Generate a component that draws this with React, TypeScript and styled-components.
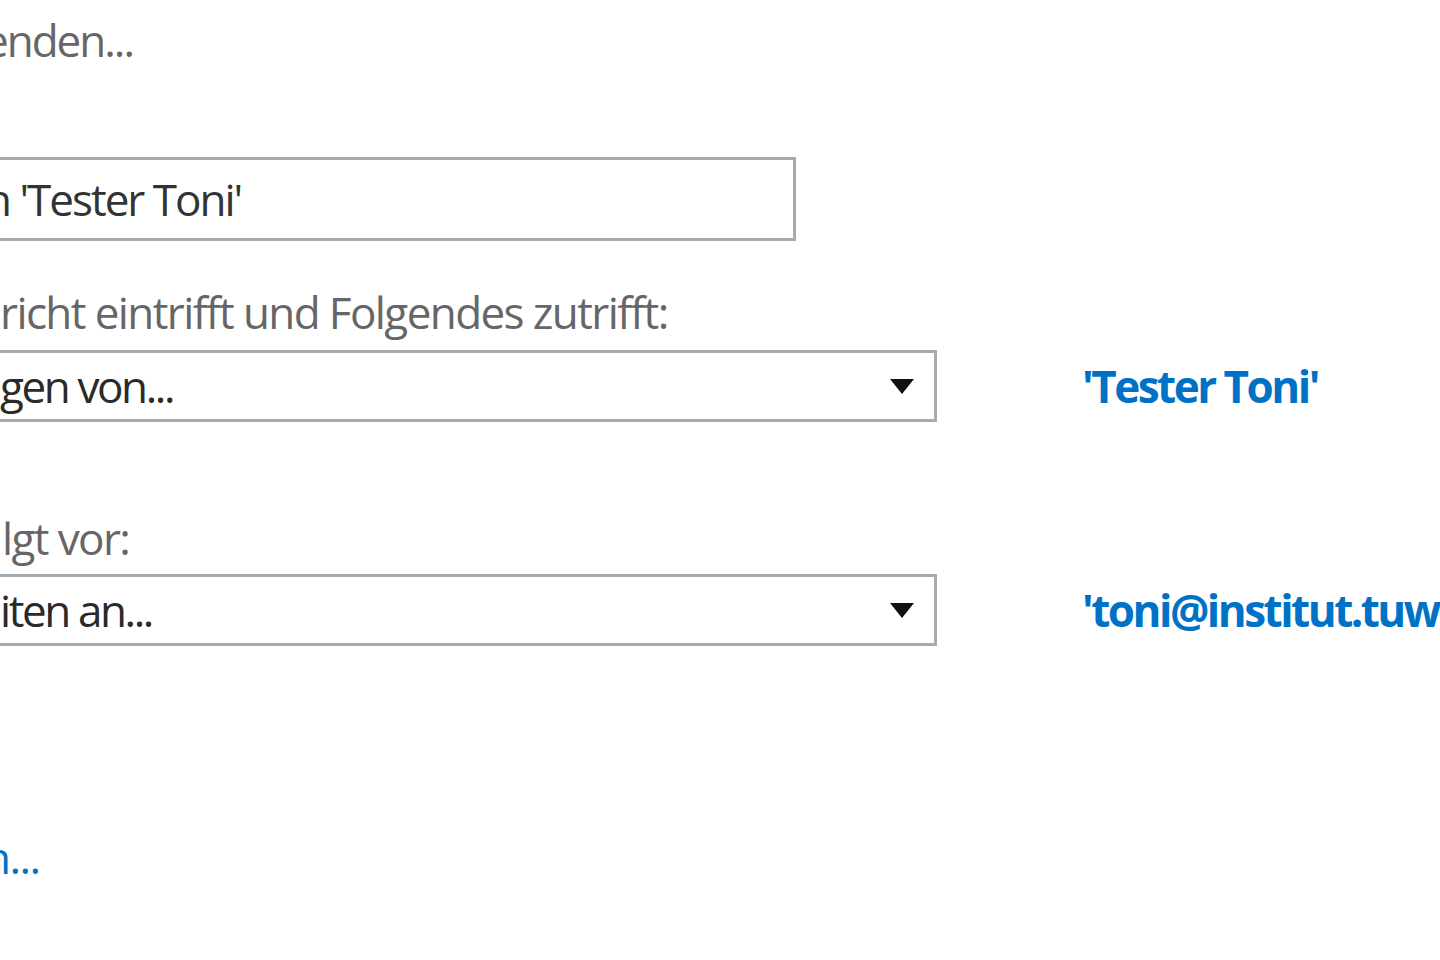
import React from 'react'
import styled, { createGlobalStyle } from 'styled-components';

const GlobalStyle = createGlobalStyle`
    html, body {
        margin: 0;
        padding: 0;
        background: #ffffff;
    }
    body {
        font-family: "Open Sans", "Noto Sans", "Liberation Sans", sans-serif;
    }
`;

const Viewport = styled.div`
    width: 1440px;
    height: 960px;
    overflow: hidden;
    display: grid;
    grid-template-columns: 937px 1fr;
    column-gap: 145px;
    align-content: start;
`;
const Title = styled.div`
    grid-column: 1 / -1;
    margin-top: 10px;
    height: 60px;
    line-height: 60px;
    font-size: 44px;
    letter-spacing: -2px;
    color: #666666;
    text-indent: -16px;
    white-space: nowrap;
`;
const NameInput = styled.div`
    grid-column: 1;
    box-sizing: border-box;
    width: 799px;
    height: 84px;
    margin-top: 87px;
    margin-left: -3px;
    border: 3px solid #a6abad;
    border-left: none;
    display: flex;
    align-items: center;
    font-size: 44px;
    letter-spacing: -2px;
    color: #333333;
    white-space: nowrap;
    text-indent: -12px;
`;
const Spacer = styled.div``;
const Label = styled.div<{ $top: number, $indent: number }>`
    grid-column: 1 / -1;
    margin-top: ${p => p.$top}px;
    height: 50px;
    line-height: 50px;
    font-size: 44px;
    letter-spacing: -1.6px;
    color: #666666;
    white-space: nowrap;
    text-indent: ${p => p.$indent}px;
`;
const SelectBox = styled.div<{ $top: number }>`
    grid-column: 1;
    box-sizing: border-box;
    height: 72px;
    margin-top: ${p => p.$top}px;
    border: 3px solid #a6abad;
    border-left: none;
    display: flex;
    align-items: center;
    justify-content: space-between;
    padding-right: 20px;
    font-size: 44px;
    letter-spacing: -2.4px;
    color: #2a2a2a;
    white-space: nowrap;
`;
const Arrow = styled.svg`
    width: 24px;
    height: 16px;
    flex: none;
`;
const Value = styled.div<{ $top: number }>`
    grid-column: 2;
    margin-top: ${p => p.$top}px;
    height: 72px;
    display: flex;
    align-items: center;
    font-size: 44px;
    font-weight: 700;
    letter-spacing: -2.5px;
    color: #0072c6;
    white-space: nowrap;
`;
const AddLink = styled.div`
    grid-column: 1 / -1;
    margin-top: 186px;
    height: 50px;
    line-height: 50px;
    font-size: 44px;
    letter-spacing: -1.5px;
    color: #0072c6;
    white-space: nowrap;
    text-indent: -16px;
    cursor: pointer;
`;

const Select = ({ text, top }: { text: string, top: number }) => (
    <SelectBox $top={top}>
        <span>{text}</span>
        <Arrow viewBox="0 0 24 16">
            <path d="M0 1 L24 1 L12 16 Z" fill="#111111" />
        </Arrow>
    </SelectBox>
);

const App = () => {
    const rows = [
        { label: "richt eintrifft und Folgendes zutrifft:", labelTop: 46, indent: 0, select: "gen von...", selectTop: 13, value: "'Tester Toni'" },
        { label: "lgt vor:", labelTop: 91, indent: 2, select: "iten an...", selectTop: 11, value: "'toni@institut.tuwien.ac.at'" },
    ];
    return (
        <>
            <GlobalStyle />
            <Viewport>
                <Title>enden...</Title>
                <NameInput>n 'Tester Toni'</NameInput>
                <Spacer />
                {rows.map((row, idx) => (
                    <React.Fragment key={`rule-row-` + idx}>
                        <Label $top={row.labelTop} $indent={row.indent}>{row.label}</Label>
                        <Select text={row.select} top={row.selectTop} />
                        <Value $top={row.selectTop}>{row.value}</Value>
                    </React.Fragment>
                ))}
                <AddLink>n...</AddLink>
            </Viewport>
        </>
    );
}

export default App;
